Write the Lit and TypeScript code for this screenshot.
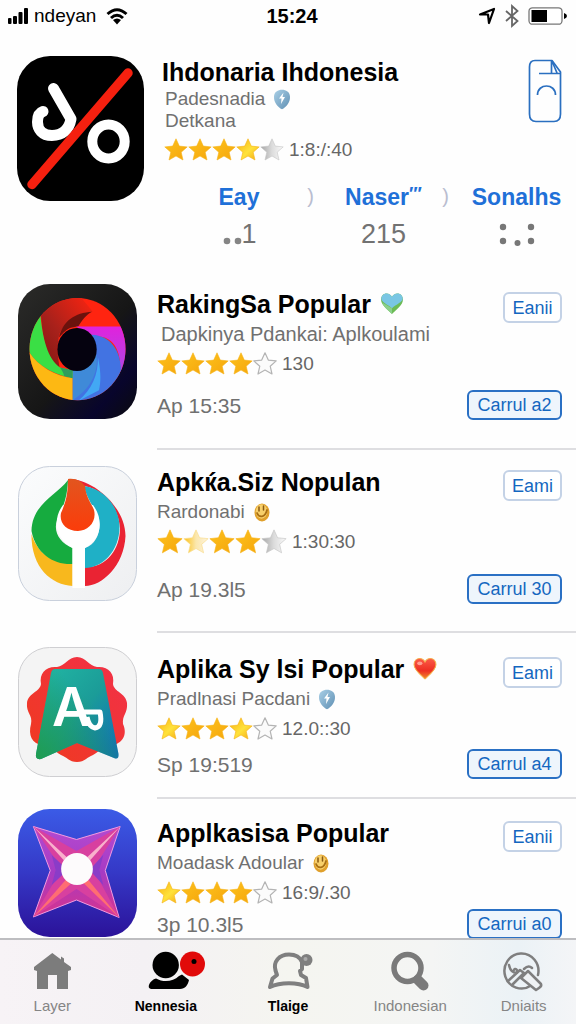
import { LitElement, html, svg, css, TemplateResult } from "lit";
import { customElement, property } from "lit/decorators.js";

type StarKind = "gold" | "bright" | "half" | "silver" | "outline";

interface AppEntry {
  name: string;
  mark?: "mint-heart" | "red-heart";
  maker: string;
  badge?: "shield" | "coin";
  stars: StarKind[];
  bigStars?: boolean;
  rating: string;
  date: string;
  open: string;
  get: string;
  icon: string;
  density: "first" | "roomy" | "snug" | "tight";
}

const STAR = "M12 .8l3.300 7.300 7.900.8-6 5.300 1.800 7.800L12 18l-7 4 1.800-7.800-6-5.300 7.900-.8z";

const shield = html`<svg class="badge" viewBox="0 0 18 21" aria-hidden="true">
  <defs><linearGradient id="sh" x1="0" y1="0" x2="1" y2="1"><stop offset="0" stop-color="#a9cfe6" /><stop offset="1" stop-color="#5f8fb3" /></linearGradient></defs>
  <path d="M9 .8c4 0 7.800 2 8 7 .2 6-4 10.500-8 12.500-4-2-8.200-6.500-8-12.500.2-5 4-7 8-7z" fill="url(#sh)" />
  <path d="M10.500 3.500L6 9.500h2.500L8 15l4-7H9.500z" fill="#fff" />
</svg>`;

const coin = html`<svg class="badge" viewBox="0 0 18 21" aria-hidden="true">
  <ellipse cx="9" cy="10.500" rx="7.500" ry="9" fill="#e0a02c" />
  <ellipse cx="8.500" cy="9.500" rx="5.800" ry="7.200" fill="#f7cf6a" />
  <path d="M6 5v4M10.500 4v4" stroke="#8a5a12" stroke-width="1.500" stroke-linecap="round" />
  <path d="M4 11c2 5 8 5 10-3" fill="none" stroke="#a96f14" stroke-width="1.800" stroke-linecap="round" />
</svg>`;

const HEART = "M11.500 21C7 17 1 12.500 1 7.300 1 3.500 3.600 1.500 6.300 1.500c2.300 0 4.200 1.300 5.200 3.300 1-2 2.900-3.300 5.200-3.300C19.400 1.500 22 3.500 22 7.300c0 5.200-6 9.700-10.500 13.700z";

const mintHeart = html`<svg class="mark" viewBox="0 0 23 23" aria-hidden="true">
  <path d=${HEART} fill="#6cbb55" />
  <path d="M11.500 15.500C7 12 1.500 9.500 1.200 6.500 1.500 3 4 1.500 6.300 1.500c2.300 0 4.200 1.300 5.200 3.300 1-2 2.900-3.300 5.200-3.300 2.500 0 4.800 1.500 5.100 5C21.500 9.500 15.500 12 11.500 15.500z" fill="#79c6e4" />
  <path d="M2 10l9.500 5.500V21C8 17.500 3.500 14.500 2 10z" fill="#8bd08a" />
</svg>`;

const redHeart = html`<svg class="mark" viewBox="0 0 23 23" aria-hidden="true">
  <defs><linearGradient id="rh" x1="0" y1="0" x2="0" y2="1"><stop offset="0" stop-color="#fb5a48" /><stop offset=".6" stop-color="#ee2f22" /><stop offset="1" stop-color="#f08a2a" /></linearGradient></defs>
  <path d=${HEART} fill="url(#rh)" stroke="#f5b04c" stroke-width="1" />
  <ellipse cx="6.500" cy="6" rx="2.500" ry="1.800" fill="#ff9e90" />
</svg>`;

const art: Record<string, TemplateResult> = {
  percent: html`<svg viewBox="0 0 127 145" preserveAspectRatio="none" aria-hidden="true">
    <rect width="127" height="145" rx="33" fill="#000" />
    <g fill="none" stroke-linecap="round">
      <path d="M36.500 32.500L54 63C52 74 45 79.500 35 79.500C25 79.500 20.500 73 20.500 66C20.500 60 23 56.500 26 55.500" stroke="#fff" stroke-width="11" stroke-linejoin="round" />
      <ellipse cx="91.500" cy="85.500" rx="16.200" ry="17" stroke="#fff" stroke-width="10" />
      <path d="M15 128.500L111 17" stroke="#f5200f" stroke-width="9.500" />
    </g>
  </svg>`,
  wheel: html`<svg viewBox="0 0 119 136" preserveAspectRatio="none" aria-hidden="true">
    <defs>
      <clipPath id="wc"><ellipse cx="59.500" cy="65.500" rx="48" ry="51.500" /></clipPath>
      <linearGradient id="wb" x1="0" y1="0" x2="1" y2="1"><stop offset="0" stop-color="#2b2b29" /><stop offset=".55" stop-color="#161616" /><stop offset=".8" stop-color="#08052c" /><stop offset="1" stop-color="#0b0b0d" /></linearGradient>
      <linearGradient id="wr" x1="0" y1="1" x2="1" y2="0"><stop offset="0" stop-color="#7c1512" /><stop offset=".45" stop-color="#a8211b" /><stop offset="1" stop-color="#ff2410" /></linearGradient>
      <linearGradient id="wm" x1="0" y1="0" x2="0" y2="1"><stop offset="0" stop-color="#e122dc" /><stop offset="1" stop-color="#a94be6" /></linearGradient>
    </defs>
    <rect width="119" height="136" rx="32" fill="url(#wb)" />
    <g clip-path="url(#wc)">
      <rect width="119" height="136" fill="#ff2410" />
      <path d="M18 31L34 14L60 10L75 28C60 28 46 38 41 52L39 66L42 88C28 78 24 50 23 31Z" fill="url(#wr)" />
      <path d="M74 28C57 29 45 37 41 54C48 45 53 43 60 43C64 37 68 31 74 28Z" fill="#6b120d" />
      <path d="M58 42.700H112V92L102 88C104 62 90 50 76 54Z" fill="url(#wm)" />
      <path d="M74 51C94 52 105 70 102.500 92L112 96V122H54.500V84Z" fill="#4273e2" />
      <path d="M78 70C82 88 72 106 56 116L54.500 122V84Z" fill="#3f8ad8" />
      <path d="M80 74C83 88 83 98 81 107L60 118C74 106 80 92 80 74Z" fill="#42a8f4" />
      <path d="M22 26C24 55 30 76 42 84L54.500 87V95C34 91 16 80 10 66L2 50Z" fill="#3adf45" />
      <path d="M42 84L54.500 87V95L46 93C46 90 44 87 42 84Z" fill="#2f9c5c" />
      <path d="M9 65C18 82 36 92 54.500 95V122H2Z" fill="#fdb813" />
    </g>
    <ellipse cx="59" cy="66" rx="19.700" ry="21.700" fill="#05020f" />
  </svg>`,
  flame: html`<svg viewBox="0 0 119 135" preserveAspectRatio="none" aria-hidden="true">
    <defs>
      <linearGradient id="fo" x1="0" y1="0" x2="0" y2="1"><stop offset="0" stop-color="#e2551f" /><stop offset="1" stop-color="#fb3c0a" /></linearGradient>
      <linearGradient id="fb" x1="0" y1="0" x2="1" y2="1"><stop offset="0" stop-color="#fbfcfd" /><stop offset="1" stop-color="#eeeff1" /></linearGradient>
    </defs>
    <rect x=".5" y=".5" width="118" height="134" rx="31" fill="url(#fb)" stroke="#c9d0dc" />
    <path d="M13.500 68C20 90 38 97 54.500 98V120C34 119 13 102 13.500 68Z" fill="#f8b81d" />
    <path d="M50 14C38 30 14 38 13.500 65C18 88 36 99 54.500 98V82C42 77 35 66 39 54C42 45 49 38 50 14Z" fill="#16ab3f" />
    <path d="M50 13C72 12 107 38 107.500 70C106 100 84 120 67 120V101C88 102 102 84 102 62C100 42 88 24 66 20Z" fill="#ea2333" />
    <path d="M66 20C90 24 101 44 101.500 60C102 85 84 102 67 102V82C80 78 84 62 80 50C77 42 69 34 66 20Z" fill="#1fb0c6" />
    <path d="M45 39C35 52 36 72 54.500 82V122H67V82C85 72 85 52 75 39Z" fill="#fff" />
    <path d="M50 13C58 12 63 15 67 20C68 32 74 38 76 44C79 56 70 65 60 65C48 65 41 57 43 47C47 38 50 30 50 13Z" fill="url(#fo)" />
  </svg>`,
  ribbon: html`<svg viewBox="0 0 119 130" preserveAspectRatio="none" aria-hidden="true">
    <defs>
      <linearGradient id="rr" x1="1" y1="0" x2="0" y2="1" gradientUnits="objectBoundingBox"><stop offset="0" stop-color="#f2304a" /><stop offset="1" stop-color="#ef3a1e" /></linearGradient>
      <linearGradient id="rg" x1="0" y1="0" x2="1" y2="1"><stop offset="0" stop-color="#22b8a4" /><stop offset=".5" stop-color="#1b9c98" /><stop offset="1" stop-color="#0f66c4" /></linearGradient>
      <linearGradient id="rl" x1="0" y1="1" x2=".6" y2=".3"><stop offset="0" stop-color="#1f9d50" /><stop offset="1" stop-color="#1f9d50" stop-opacity="0" /></linearGradient>
    </defs>
    <rect x=".5" y=".5" width="118" height="129" rx="31" fill="#f4f4f4" stroke="#cfcfd2" />
    <path d="M59 10C68 10 71 19 79 20C90 19 97 26 95 37C96 45 108 46 109 56C110 66 104 68 105 77C110 88 104 97 94 98C84 99 82 104 75 108C69 110 67 115 59 115C51 115 49 110 43 108C36 104 34 99 24 98C14 97 10 88 13 77C15 68 8 66 9 56C10 46 22 45 23 37C21 26 28 19 39 20C47 19 50 10 59 10Z" fill="url(#rr)" />
    <path d="M37 22H81Q84 22 85 26L100.500 107Q101 113 96 111L59 96L23 112Q17 113 18 107L33 26Q34 22 37 22Z" fill="url(#rg)" />
    <path d="M37 22H81Q84 22 85 26L100.500 107Q101 113 96 111L59 96L23 112Q17 113 18 107L33 26Q34 22 37 22Z" fill="url(#rl)" />
    <text x="34" y="79" class="letter">A</text>
    <path d="M66 65H82Q85 80 77 81Q71 80 69 70" fill="none" stroke="#fff" stroke-width="5" stroke-linejoin="round" />
  </svg>`,
  spark: html`<svg viewBox="0 0 120 128" preserveAspectRatio="none" aria-hidden="true">
    <defs>
      <linearGradient id="sb" x1="0" y1="0" x2="0" y2="1"><stop offset="0" stop-color="#3b5be6" /><stop offset=".5" stop-color="#3538c6" /><stop offset="1" stop-color="#2b1299" /></linearGradient>
      <linearGradient id="ss" x1="0" y1="0" x2="0" y2="1"><stop offset="0" stop-color="#b44ad0" /><stop offset=".5" stop-color="#a63bc4" /><stop offset="1" stop-color="#d8338c" /></linearGradient>
    </defs>
    <rect width="120" height="128" rx="32" fill="url(#sb)" />
    <path d="M15.500 17.500L59 30.500L103 17.500L88 61.500L102 108.500L59 91L15.500 108L32.500 61.500Z" fill="url(#ss)" stroke="#f39be0" stroke-width="1" />
    <path d="M15.500 17.500L59 42L103 17.500L76 60L102 108.500L59 80L15.500 108L44 60Z" fill="#d8409f" />
    <path d="M15.500 17.500L46 51L49 48ZM103 17.500L70 48L73 51Z" fill="#f9b0cc" />
    <path d="M102 108.500L66 74L71 71ZM15.500 108L48 71L53 75Z" fill="#ff6d72" />
    <path d="M34 46L50 61L34 76L38 61ZM86 46L72 61L86 76L82 61Z" fill="#8a3cc8" />
    <circle cx="59.500" cy="60" r="16" fill="#fdfbfc" />
  </svg>`,
};

const tabIcons: Record<string, TemplateResult> = {
  home: html`<svg viewBox="0 0 48 40" aria-hidden="true"><path fill="#7c7c7c" d="M24.300 2L33 8.500V5.500l3 2v3.500L43 16v3l-3 1V38H29V24H20V38H9V20L6 19V16Z" /></svg>`,
  people: html`<svg viewBox="0 0 48 40" aria-hidden="true">
    <circle cx="23.700" cy="14" r="13.200" />
    <path d="M14 27.500C21 31.500 31 31 37 25L40 23.500L47 29C46 34 43 38 38 38H9C4 37 8 29 14 27.500Z" />
    <circle cx="50.500" cy="13" r="12.500" fill="#e10a0a" /><circle cx="52" cy="10.500" r="2.500" />
  </svg>`,
  chat: html`<svg viewBox="0 0 48 40" aria-hidden="true">
    <path d="M6 36L8.500 27.500L13 24L11.500 19.500C9 11 15 3.500 25 3.500C31 3.500 36 6 38 11L38 18L36 20L37 24L42 27L43.500 36C34 31 16 31 6 36Z" fill="none" stroke="#7f7f7f" stroke-width="4" stroke-linejoin="round" />
    <circle cx="42.500" cy="9" r="6" fill="#7f7f7f" /><circle cx="41.500" cy="8" r="2" fill="#aaa" />
  </svg>`,
  search: html`<svg viewBox="0 0 48 40" aria-hidden="true">
    <circle cx="21.500" cy="17" r="13.500" fill="none" stroke="#7a7a7a" stroke-width="5.500" />
    <path d="M32 29L37.500 34.500" stroke="#7a7a7a" stroke-width="10" stroke-linecap="round" />
  </svg>`,
  tools: html`<svg viewBox="0 0 48 40" aria-hidden="true"><g fill="none" stroke="#7f7f7f" stroke-width="2.500" stroke-linecap="round" stroke-linejoin="round">
    <path d="M31 34.500A17 17.500 0 1 1 38 24" />
    <path d="M9 14C10 19 13 22 17 22C18 18 15 17 14 19M8 30L20 19L24 22M12 34L23 23M24 18C27 15 30 15 32 17" />
    <path d="M28 20L41 33Q42 35 39 37L36 39L21 27Z" fill="#eff2f4" />
  </g></svg>`,
};

@customElement("star-row")
class StarRow extends LitElement {
  @property({ attribute: false }) kinds: StarKind[] = [];
  @property({ type: Boolean }) big = false;

  static styles = css`
    :host { display: inline-flex; }
    .star { width: 24px; height: 24px; display: block; }
    .big { width: 26px; height: 26px; }
  `;

  render() {
    return this.kinds.map((k) => html`<svg class="star ${this.big ? "big" : ""}" viewBox="0 0 24 24" aria-hidden="true">
      <defs>
        <linearGradient id="gold" x1="0" y1="0" x2="1" y2="1"><stop offset="0" stop-color="#fdc21c" /><stop offset="1" stop-color="#f5a50c" /></linearGradient>
        <linearGradient id="bright" x1="0" y1="0" x2="1" y2="1"><stop offset="0" stop-color="#f6ae10" /><stop offset=".55" stop-color="#ffe23a" /><stop offset="1" stop-color="#f3a714" /></linearGradient>
        <linearGradient id="half" x1="0" y1="0" x2="1" y2="0"><stop offset=".1" stop-color="#fcc832" /><stop offset=".5" stop-color="#fbe7ad" /><stop offset="1" stop-color="#fdf3dc" /></linearGradient>
        <linearGradient id="silver" x1="0" y1="0" x2="1" y2="0"><stop offset="0" stop-color="#a6a6a6" /><stop offset=".5" stop-color="#dcdcdc" /><stop offset="1" stop-color="#fafafa" /></linearGradient>
      </defs>
      ${k === "outline"
        ? svg`<path d=${STAR} fill="#fbfbfb" stroke="#b4b4b4" stroke-width="1.200" stroke-linejoin="round" />`
        : svg`<path d=${STAR} fill=${`url(#${k})`} stroke=${k === "silver" ? "#c4c4c4" : k === "half" ? "#f9dc8a" : "#f7b419"} stroke-width=".6" stroke-linejoin="round" />`}
    </svg>`);
  }
}

const apps: AppEntry[] = [
  { name: "RakingSa Popular", mark: "mint-heart", maker: "Dapkinya Pdankai: Aplkoulami", stars: ["gold", "gold", "gold", "gold", "outline"], rating: "130", date: "Ap 15:35", open: "Eanii", get: "Carrul a2", icon: "wheel", density: "first" },
  { name: "Apkќa.Siz Nopulan", maker: "Rardonabi", badge: "coin", stars: ["gold", "half", "gold", "gold", "silver"], bigStars: true, rating: "1:30:30", date: "Ap 19.3l5", open: "Eami", get: "Carrul 30", icon: "flame", density: "roomy" },
  { name: "Aplika Sy lsi Popular", mark: "red-heart", maker: "Pradlnasi Pacdani", badge: "shield", stars: ["bright", "gold", "gold", "bright", "outline"], rating: "12.0::30", date: "Sp 19:519", open: "Eami", get: "Carrul a4", icon: "ribbon", density: "snug" },
  { name: "Applkasisa Popular", maker: "Moadask Adoular", badge: "coin", stars: ["bright", "gold", "gold", "gold", "outline"], rating: "16:9/.30", date: "3p 10.3l5", open: "Eanii", get: "Carrui a0", icon: "spark", density: "tight" },
];

const tabs = [
  { label: "Layer", icon: "home", active: false },
  { label: "Nennesia", icon: "people", active: true },
  { label: "Tlaige", icon: "chat", active: true },
  { label: "Indonesian", icon: "search", active: false },
  { label: "Dniaits", icon: "tools", active: false },
];

@customElement("app-root")
class AppRoot extends LitElement {
  static styles = css`
    :host {
      display: flex;
      flex-direction: column;
      height: 100vh;
      background: #fefefe;
      color: #000;
      font-family: "Liberation Sans", Arial, sans-serif;
    }
    * { box-sizing: border-box; }
    h1, h2, p, ul { margin: 0; padding: 0; }
    svg { display: block; flex: none; overflow: visible; }
    button { font: inherit; cursor: pointer; }

    .status {
      display: grid;
      grid-template-columns: 1fr auto 1fr;
      align-items: center;
      height: 32px;
      padding: 0 8px;
      font-size: 20px;
      line-height: 24px;
    }
    .carrier, .system { display: flex; align-items: center; gap: 6px; }
    .carrier { font-size: 19px; }
    .system { justify-content: flex-end; gap: 8px; }
    .time { font-weight: 700; padding-left: 8px; }
    .signal { width: 20px; height: 16px; }
    .wifi { width: 22px; height: 17px; margin-left: 4px; }
    .arrow { width: 18px; height: 18px; }
    .blue { width: 16px; height: 24px; }
    .battery { width: 40px; height: 18px; }

    main { flex: 1; min-height: 0; overflow-y: auto; scrollbar-width: none; }

    .title { font-size: 25px; line-height: 32px; font-weight: 700; display: flex; align-items: center; gap: 9px; white-space: nowrap; }
    .maker { font-size: 19px; line-height: 28px; color: #707070; display: flex; align-items: center; gap: 8px; white-space: nowrap; }
    .rating { display: flex; align-items: center; gap: 5px; height: 32px; font-size: 19px; color: #666; }
    .badge { width: 18px; height: 21px; }
    .mark { width: 24px; height: 24px; }

    .hero { display: flex; align-items: flex-start; padding: 24px 14px 0 17px; }
    .hero-icon { width: 127px; height: 145px; }
    .hero-icon svg { width: 100%; height: 100%; }
    .hero-body { flex: 1; padding-left: 18px; }
    .hero-body .maker { line-height: 22px; padding-left: 3px; }
    .hero-body .rating { height: 36px; padding-left: 2px; }
    .plain { background: none; border: 0; padding: 0; }
    .doc { width: 34px; height: 64px; margin-top: 3px; }

    .facts { display: grid; grid-template-columns: 142fr 135fr 131fr; margin: -20px 0 0; padding-left: 168px; list-style: none; }
    .hero + .facts { margin-top: -24px; padding-top: 4px; }
    .fact { display: flex; flex-direction: column; align-items: center; position: relative; padding-left: 12px; }
    .fact:first-child { padding-left: 0; }
    .fact:not(:last-child)::after { content: ")"; position: absolute; right: -4px; top: 3px; font-size: 20px; line-height: 24px; color: #b9bdd0; }
    .link { color: #1f70d8; font-weight: 700; font-size: 23px; line-height: 32px; text-decoration: none; white-space: nowrap; }
    .tick { font-size: 18px; line-height: 1; vertical-align: 5px; }
    .value { display: flex; align-items: flex-end; height: 44px; font-size: 27px; line-height: 46px; color: #727272; }
    .dots { width: 20px; height: 44px; }
    .pattern { width: 36px; height: 44px; }

    .row { display: flex; align-items: flex-start; }
    .icon { width: 157px; flex: none; padding-left: 18px; }
    .icon svg { width: 119px; height: 135px; }
    .content { flex: 1; min-width: 0; display: flex; justify-content: space-between; padding-right: 14px; border-bottom: 2px solid #dedee1; }
    .row:last-child .content { border-bottom: 0; }
    .actions { display: flex; flex-direction: column; align-items: flex-end; justify-content: space-between; padding-top: 4px; }
    .date { font-size: 21px; line-height: 28px; color: #707070; }

    .first { padding-top: 23px; }
    .first .icon { padding-top: 4px; }
    .first .content { padding-top: 8px; padding-bottom: 28px; }
    .first .maker { font-size: 20px; padding-left: 4px; }
    .first .date { margin-top: 12px; }
    .roomy .icon { padding-top: 16px; }
    .roomy .content { padding-top: 16px; padding-bottom: 27px; }
    .roomy .date { margin-top: 18px; }
    .snug .icon { padding-top: 14px; }
    .snug .icon svg { height: 130px; }
    .snug .content { padding-top: 20px; padding-bottom: 18px; }
    .snug .date { margin-top: 6px; }
    .tight .icon { padding-top: 10px; }
    .tight .icon svg { height: 128px; }
    .tight .content { padding-top: 18px; }
    .tight .date { margin-top: 2px; }

    .open, .get { font-size: 18px; line-height: 26px; height: 31px; color: #1467c0; border-radius: 6px; padding: 0 7px; white-space: nowrap; }
    .open { border: 2px solid #c4d2e6; background: #fff; min-width: 59px; }
    .get { border: 2px solid #2a70c4; background: #eef5fc; min-width: 95px; height: 30px; }
    .letter { font-family: Inter, "Liberation Sans", sans-serif; font-size: 54px; font-weight: 600; fill: #fff; }

    .tabbar {
      display: grid;
      grid-template-columns: 6fr 7fr 7fr 7fr 6fr;
      height: 86px;
      border-top: 2px solid #bdbdc0;
      background: linear-gradient(90deg, #f7f3f6, #f4f1f4 25%, #f5f5f0 50%, #f4f5f4 75%, #ebf2f6 90%, #f4f5f7);
    }
    .tab { display: flex; flex-direction: column; align-items: center; gap: 4px; padding-top: 11px; color: #858585; font-size: 15px; line-height: 22px; text-decoration: none; }
    .tab svg { width: 48px; height: 40px; }
    .active { color: #000; font-weight: 700; font-size: 14px; }
  `;

  private row(a: AppEntry) {
    return html`<article class="row ${a.density}">
      <div class="icon">${art[a.icon]}</div>
      <div class="content">
        <div>
          <h2 class="title">${a.name}${a.mark === "mint-heart" ? mintHeart : a.mark === "red-heart" ? redHeart : ""}</h2>
          <p class="maker">${a.maker}${a.badge === "shield" ? shield : a.badge === "coin" ? coin : ""}</p>
          <div class="rating"><star-row .kinds=${a.stars} ?big=${a.bigStars}></star-row><span>${a.rating}</span></div>
          <p class="date">${a.date}</p>
        </div>
        <div class="actions">
          <button class="open">${a.open}</button>
          <button class="get">${a.get}</button>
        </div>
      </div>
    </article>`;
  }

  render() {
    return html`
      <header class="status">
        <div class="carrier">
          <svg class="signal" viewBox="0 0 20 16" aria-hidden="true"><rect x="0" y="10" width="3.500" height="6" rx="1" /><rect x="5" y="8" width="4" height="8" rx="1" /><rect x="10.500" y="4" width="4" height="12" rx="1" /><rect x="16" y="0" width="4" height="16" rx="1" /></svg>
          <span>ndeyan</span>
          <svg class="wifi" viewBox="0 0 22 17" aria-hidden="true"><g fill="none" stroke="#000" stroke-width="3"><path d="M1.500 6Q11-2.500 20.500 6" /><path d="M5 10Q11 4.500 17 10" /></g><path d="M7 12Q11 9 15 12L11 16.500Z" /></svg>
        </div>
        <span class="time">15:24</span>
        <div class="system">
          <svg class="arrow" viewBox="0 0 18 18" aria-hidden="true"><path d="M2 7.500L16 2L11 16L10 7.500Z" fill="#fff" stroke="#000" stroke-width="2.200" stroke-linejoin="round" /></svg>
          <svg class="blue" viewBox="0 0 16 24" aria-hidden="true"><path d="M2 7L13.500 17L8 22V2L13.500 7L2 17" fill="none" stroke="#666" stroke-width="1.800" /></svg>
          <svg class="battery" viewBox="0 0 40 18" aria-hidden="true"><rect x="1" y=".8" width="33" height="16.400" rx="3.500" fill="#fff" stroke="#777" stroke-width="1.300" /><rect x="3.500" y="3" width="15.500" height="12" fill="#000" /><path d="M36 6q3 1 3 3t-3 3z" /></svg>
        </div>
      </header>
      <main>
        <section class="hero">
          <div class="hero-icon">${art.percent}</div>
          <div class="hero-body">
            <h1 class="title">Ihdonaria Ihdonesia</h1>
            <p class="maker">Padesnadia ${shield}</p>
            <p class="maker">Detkana</p>
            <div class="rating"><star-row .kinds=${["gold", "gold", "gold", "bright", "silver"] as StarKind[]}></star-row><span>1:8:/:40</span></div>
          </div>
          <button class="plain" aria-label="Document">
            <svg class="doc" viewBox="0 0 34 64" aria-hidden="true"><g fill="none" stroke="#2a6fc0" stroke-width="1.700" stroke-linejoin="round"><path d="M7 1.500H24L32.500 13V55Q32.500 62.500 26 62.500H8Q1.500 62.500 1.500 55V8Q1.500 1.500 7 1.500Z" /><path d="M11 14.500H32M23.500 2V14.500M24 2L29 14" /><path d="M9.500 36C9.500 24 27.500 24 27.500 36" /></g></svg>
          </button>
        </section>
        <ul class="facts">
          <li class="fact"><a class="link" href="#eay">Eay</a><span class="value"><svg class="dots" viewBox="0 0 20 44" aria-hidden="true"><circle cx="6" cy="28" r="3.300" fill="#858585" /><circle cx="17" cy="28" r="3.300" fill="#858585" /></svg>1</span></li>
          <li class="fact"><a class="link" href="#naser">Naser<span class="tick">″′</span></a><span class="value">215</span></li>
          <li class="fact"><a class="link" href="#sonalhs">Sonalhs</a><span class="value"><svg class="pattern" viewBox="0 0 36 44" aria-hidden="true"><g fill="#777"><circle cx="4" cy="14" r="3.200" /><circle cx="4" cy="28" r="3.200" /><circle cx="18.500" cy="30" r="3" /><circle cx="32" cy="14" r="3.200" /><circle cx="32" cy="28" r="3.200" /></g></svg></span></li>
        </ul>
        ${apps.map((a) => this.row(a))}
      </main>
      <nav class="tabbar">
        ${tabs.map((t) => html`<a class="tab ${t.active ? "active" : ""}" href="#${t.icon}">${tabIcons[t.icon]}<span>${t.label}</span></a>`)}
      </nav>
    `;
  }
}
